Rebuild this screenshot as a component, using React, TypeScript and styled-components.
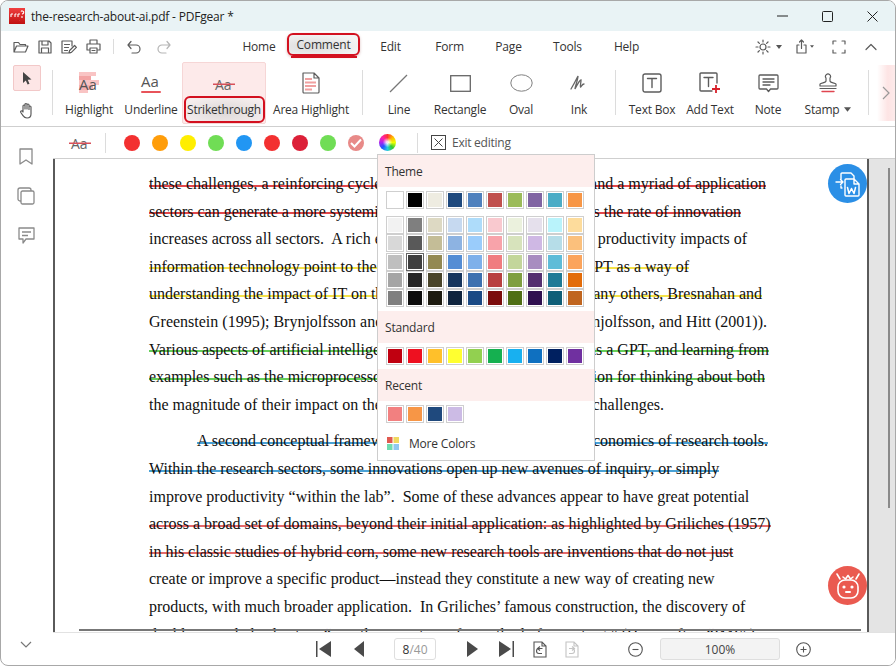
import React from "react";
import styled, { createGlobalStyle } from "styled-components";

const Global = createGlobalStyle`
  html, body { margin: 0; padding: 0; background: #fff; }
  #root { width: 896px; height: 666px; overflow: hidden; }
  * { box-sizing: border-box; }
`;

const UI = `"Open Sans", "Noto Sans", sans-serif`;

const Win = styled.div`
  position: relative; width: 896px; height: 666px; display: flex; flex-direction: column;
  background: #fff; border: 1px solid #a8a8a8; border-radius: 8px; overflow: hidden;
  font-family: ${UI}; color: #333;
`;
const TitleBar = styled.div`
  flex: none; height: 30px; background: #e9f3f5; display: flex; align-items: center; padding-left: 8px;
`;
const TitleText = styled.div`
  margin-left: 6px; font-size: 12px; letter-spacing: -0.2px; color: #222; white-space: nowrap;
`;
const WinControls = styled.div`
  margin-left: auto; display: flex; align-items: center;
`;
const WinBtn = styled.div`
  width: 45px; height: 30px; display: flex; align-items: center; justify-content: center;
`;
const MenuBar = styled.div`
  flex: none; height: 31px; display: flex; align-items: center; padding-left: 8px;
`;
const QuickBtn = styled.div<{ $w?: number; $ml?: number }>`
  flex: none; width: ${(p) => p.$w ?? 24}px; margin-left: ${(p) => p.$ml ?? 0}px; height: 24px; display: flex; align-items: center; justify-content: center;
`;
const VSep = styled.div<{ $h: number; $ml: number; $mr: number; $mt?: number }>`
  flex: none; width: 1px; height: ${(p) => p.$h}px; background: #dcdcdc;
  margin-left: ${(p) => p.$ml}px; margin-right: ${(p) => p.$mr}px; margin-top: ${(p) => p.$mt ?? 0}px;
`;
const Tabs = styled.div`
  display: flex; align-items: center; margin-left: 52px; height: 31px;
`;
const Tab = styled.div<{ $w: number }>`
  width: ${(p) => p.$w}px; text-align: center; font-size: 12px; letter-spacing: -0.2px; color: #333;
`;
const ActiveTab = styled.div`
  position: relative; width: 73px; height: 23px; margin-top: -5px; margin-right: 1px; border: 2px solid #d3101f; border-radius: 6px;
  background: radial-gradient(ellipse at 30% 60%, #dcdcdc, #f4f4f4 80%);
  display: flex; align-items: center; justify-content: center; font-size: 12px; letter-spacing: -0.2px; color: #333; padding-top: 1px;
  box-shadow: 0 1px 3px rgba(120,0,0,.25);
  &::after { content: ""; position: absolute; left: 2px; right: 1px; bottom: -4px; height: 2px; background: #d3101f; }
`;
const RightTools = styled.div`
  margin-left: auto; display: flex; align-items: center; padding-right: 9px;
`;
const Ribbon = styled.div`
  flex: none; height: 65px; display: flex; align-items: flex-start; border-bottom: 1px solid #cfcfcf;
`;
const HandCol = styled.div`
  width: 51px; flex: none; height: 62px; display: flex; flex-direction: column; align-items: flex-start; padding-left: 12px; padding-top: 3px;
`;
const ToolToggle = styled.div<{ $on?: boolean }>`
  width: 28px; height: 26px; display: flex; align-items: center; justify-content: center; border-radius: 2px;
  background: ${(p) => (p.$on ? "#fde6e6" : "transparent")};
  border: 1px solid ${(p) => (p.$on ? "#f2c8c8" : "transparent")};
  margin-bottom: ${(p) => (p.$on ? 6 : 0)}px;
`;
const RibbonItem = styled.div<{ $w: number }>`
  flex: none; width: ${(p) => p.$w}px; height: 62px; display: flex; flex-direction: column; align-items: center;
`;
const IconArea = styled.div`
  height: 34px; width: 100%; display: flex; align-items: center; justify-content: center; padding-top: 8px;
`;
const RibbonLabel = styled.div`
  display: flex; align-items: center; gap: 5px; font-size: 12px; letter-spacing: -0.22px; line-height: 27px; color: #333; white-space: nowrap;
`;
const StrikeItem = styled(RibbonItem)`
  background: #fdeaea; border: 1px solid #f6d6d6; border-radius: 2px;
`;
const StrikeLabel = styled.div`
  width: 81px; height: 27px; margin-top: -1px; border: 2px solid #d3101f; border-radius: 6px; font-size: 12px; letter-spacing: -0.22px;
  display: flex; align-items: center; justify-content: center; color: #333; white-space: nowrap;
  background: radial-gradient(ellipse at 50% 60%, #dcd8d8, #f6eeee 85%);
`;
const RibbonMore = styled.div`
  margin-left: auto; width: 18px; height: 56px; margin-top: 3px; display: flex; align-items: center; justify-content: center;
  background: linear-gradient(90deg, #fff, #fde4e4 60%, #fdeaea);
`;
const Body = styled.div`
  flex: 1; min-height: 0; display: flex;
`;
const Sidebar = styled.div`
  flex: none; width: 52px; display: flex; flex-direction: column; align-items: center; padding-top: 10px; position: relative;
`;
const SideBtn = styled.div`
  flex: none; height: 39.5px; width: 100%; display: flex; align-items: center; justify-content: center; padding-right: 2px;
`;
const SideFoot = styled.div`
  margin-top: auto; height: 40px; display: flex; align-items: center; justify-content: center; padding-right: 2px;
`;
const Main = styled.div`
  flex: 1; min-width: 0; display: flex; flex-direction: column;
`;
const SubBar = styled.div`
  flex: none; height: 32px; display: flex; align-items: center; border-bottom: 1px solid #cfcfcf; padding-left: 13px;
`;
const SubIcon = styled.div`
  width: 28px; display: flex; justify-content: center;
`;
const Dots = styled.div`
  display: flex; gap: 12px; align-items: center;
`;
const Dot = styled.div<{ $c: string }>`
  width: 16px; height: 16px; border-radius: 50%; background: ${(p) => p.$c}; display: flex; align-items: center; justify-content: center;
`;
const Wheel = styled.div`
  width: 17px; height: 17px; border-radius: 50%; margin-left: 3px;
  background: radial-gradient(circle, rgba(255,255,255,.85) 0 8%, transparent 40%), conic-gradient(#f33, #fb0, #ef0, #3c3, #2cd, #25f, #a2e, #f2a, #f33);
`;
const ExitLabel = styled.div`
  margin-left: 6px; font-size: 12px; letter-spacing: -0.25px; color: #555;
`;
const DocRow = styled.div`
  flex: 1; min-height: 0; display: flex;
`;
const Doc = styled.div`
  position: relative; width: 816px; flex: none; overflow: hidden; border-left: 2px solid #5a5a5a; border-right: 2px solid #5a5a5a;
  padding: 11px 0 0 94px; font-family: "Liberation Serif", "Times New Roman", serif; font-size: 16px; color: #111;
`;
const Para = styled.div`
  margin-bottom: 9px;
`;
const Line = styled.div<{ $w: number; $indent?: number }>`
  display: flex; justify-content: space-between; white-space: pre; height: 27.6px; line-height: 27.6px;
  width: ${(p) => p.$w}px; margin-left: ${(p) => p.$indent ?? 0}px;
`;
const Seg = styled.span<{ $s?: string }>`
  flex: none;
  background: ${(p) => (p.$s ? `linear-gradient(${p.$s}, ${p.$s}) 0 14.6px / 100% 2px no-repeat` : "none")};
`;
const PageEdge = styled.div`
  position: absolute; left: 24px; width: 782px; top: 470px; height: 2px; background: #777;
`;
const ScrollTrack = styled.div`
  flex: 1; background: #e4e4e4; position: relative;
`;
const ScrollThumb = styled.div`
  position: absolute; top: 9px; right: 5px; width: 2px; height: 340px; background: #8a8a8a;
`;
const Status = styled.div`
  flex: none; height: 33px; display: flex; align-items: center; background: #fff; border-top: 1px solid #e2e2e2;
`;
const NavBtn = styled.div<{ $ml: number; $w?: number }>`
  flex: none; margin-left: ${(p) => p.$ml}px; width: ${(p) => p.$w ?? 16}px; display: flex; justify-content: center; align-items: center;
`;
const PageBox = styled.div`
  flex: none; margin-left: 27.5px; width: 42px; height: 22px; border: 1px solid #dedede; border-radius: 3px; display: flex; align-items: center; justify-content: center;
  font-size: 12px; color: #333;
`;
const Dim = styled.span`
  color: #999;
`;
const ZoomBox = styled.div`
  flex: none; margin-left: 17px; width: 120px; height: 22px; border: 1px solid #dedede; border-radius: 3px; background: #f3f3f3;
  display: flex; align-items: center; justify-content: center; font-size: 12px; color: #444;
`;
const Popup = styled.div`
  position: absolute; left: 376px; top: 153px; width: 218px; height: 307px; background: #fff; border: 1px solid #cdcdcd; z-index: 5;
  display: flex; flex-direction: column;
`;
const PopHead = styled.div`
  height: 32px; flex: none; background: #fdeeed; display: flex; align-items: center; padding-left: 7px; font-size: 12px; color: #333; letter-spacing: -0.2px;
`;
const SwatchRow = styled.div<{ $mt: number; $mb?: number }>`
  display: flex; gap: 2px; padding-left: 8px; margin-top: ${(p) => p.$mt}px; margin-bottom: ${(p) => p.$mb ?? 0}px;
`;
const Swatch = styled.div<{ $c: string; $sel?: boolean }>`
  width: 18px; height: 18px; padding: 1px; flex: none; border: 1px solid ${(p) => (p.$sel ? "#666" : "#cfcfcf")};
  background: ${(p) => p.$c}; background-clip: content-box;
`;
const SwatchGap = styled.div<{ $h: number }>`
  flex: none; height: ${(p) => p.$h}px;
`;
const More = styled.div`
  display: flex; align-items: center; padding-left: 9px; margin-top: 12px; font-size: 12px; letter-spacing: -0.2px; color: #333; gap: 10px;
`;
const Float = styled.div<{ $c: string; $top: number }>`
  position: absolute; left: 827px; top: ${(p) => p.$top}px; width: 39px; height: 39px; border-radius: 50%; background: ${(p) => p.$c};
  display: flex; align-items: center; justify-content: center; z-index: 4;
`;

const S = { fill: "none", stroke: "#5c5c5c", strokeWidth: 1.2, strokeLinecap: "round" as const, strokeLinejoin: "round" as const };

const Logo = () => (
  <svg width="16" height="16" viewBox="0 0 16 16">
    <defs><linearGradient id="lg" x1="0" y1="0" x2="0" y2="1"><stop offset="0" stopColor="#f04040" /><stop offset="1" stopColor="#c01010" /></linearGradient></defs>
    <rect width="16" height="16" fill="url(#lg)" />
    <path d="M2 6v3M2 6h2M6 6v3M6 6h1.5M9 6v3M9 6h2M12 3.5a1.5 1.5 0 1 1 1 2.4M13 8v2M10.5 12.5h.1" stroke="#fff" strokeWidth="1.1" fill="none" />
  </svg>
);
const Svg = ({ w = 16, h = 16, vb, children }: { w?: number; h?: number; vb?: string; children: React.ReactNode }) => (
  <svg width={w} height={h} viewBox={vb ?? `0 0 ${w} ${h}`} {...S}>{children}</svg>
);
const Folder = () => <Svg w={16} h={14}><path d="M1 12V2.5h4.5l1.5 2h5.5v1.5M1 12l2.5-6h11.5l-2.5 6z" /></Svg>;
const Save = () => <Svg w={14} h={14}><path d="M1 1h10l2 2v10H1zM4 1v4h6V1M3.5 13V8h7v5" /></Svg>;
const SaveAs = () => <Svg w={16} h={14}><path d="M9 13H1V1h10v5M3.5 4.5h5M3.5 7.5h4M3.5 10.5h3M8 13l.6-2.5 5-5 1.8 1.8-5 5z" /></Svg>;
const Print = () => <Svg w={15} h={15}><path d="M4 5V1h7v4M3.5 11H1V5h13v6h-2.5M4 9h7v5H4z" /><path d="M6 11.5h3" /></Svg>;
const Undo = ({ c = "#5c5c5c" }: { c?: string }) => (
  <svg width="14" height="14" viewBox="0 0 14 14" {...S} stroke={c}><path d="M1 5h8a3.8 3.8 0 0 1 0 8H5M4 1.5 1 5l3 3.5" /></svg>
);
const Redo = () => (
  <svg width="14" height="14" viewBox="0 0 14 14" {...S} stroke="#b5b5b5"><path d="M13 5H5a3.8 3.8 0 0 0 0 8h4M10 1.5 13 5l-3 3.5" /></svg>
);
const Sun = () => <Svg w={16} h={16}><circle cx="8" cy="8" r="3" /><path d="M8 1v2M8 13v2M1 8h2M13 8h2M3 3l1.4 1.4M11.6 11.6 13 13M3 13l1.4-1.4M11.6 4.4 13 3" /></Svg>;
const Caret = ({ c = "#555", w = 6, h = 4 }: { c?: string; w?: number; h?: number }) => <svg width={w} height={h} viewBox="0 0 6 4"><path d="M0 0h6L3 4z" fill={c} /></svg>;
const Share = () => <Svg w={14} h={15}><path d="M4 6H2v8h9V6H9M6.5 9.5V1M4.5 3 6.5 1l2 2" /></Svg>;
const Full = () => <Svg w={14} h={14}><path d="M1 4V1h3M10 1h3v3M13 10v3h-3M4 13H1v-3" /></Svg>;
const Up = () => <Svg w={12} h={8}><path d="M1 6.5 6 1.5l5 5" /></Svg>;
const Pointer = () => <svg width="12" height="15" viewBox="0 0 12 15"><path d="M2 1v11l2.8-2.6 1.8 4.2 1.9-.8-1.8-4.1 3.8-.3z" fill="#444" /></svg>;
const HandIco = () => (
  <svg width="16" height="17" viewBox="0 0 16 17" {...S}>
    <path d="M4 10V4a1 1 0 0 1 2 0v3V2.5a1 1 0 0 1 2 0V7V3a1 1 0 0 1 2 0v4.5V5a1 1 0 0 1 2 0v7c0 2.5-1.5 4-4 4-2 0-3-.8-4-2.3L1.8 10.5c-.8-1.3.8-2.2 1.7-1.2z" />
  </svg>
);
const AaGlyph = styled.text`
  font-family: ${UI}; font-size: 15px; fill: #555;
`;
const HighlightIco = () => (
  <svg width="24" height="22" viewBox="0 0 24 22">
    <rect x="2" y="0" width="17" height="4" fill="#f9c4c4" /><rect x="2" y="4" width="12" height="4" fill="#f3a4a4" />
    <rect x="2" y="8" width="20" height="5" fill="#f9c4c4" /><rect x="2" y="13" width="14" height="5" fill="#f5b0b0" /><rect x="2" y="18" width="9" height="3" fill="#f9c4c4" />
    <AaGlyph x="2" y="18">Aa</AaGlyph>
  </svg>
);
const UnderlineIco = () => (
  <svg width="24" height="22" viewBox="0 0 24 22">
    <AaGlyph x="2" y="15">Aa</AaGlyph><rect x="2" y="19" width="20" height="2" rx="1" fill="#e8535a" />
  </svg>
);
const StrikeIco = () => (
  <svg width="24" height="18" viewBox="0 0 24 18">
    <AaGlyph x="3" y="15" style={{ fontSize: 14, fill: "#666" }}>Aa</AaGlyph><rect x="1" y="8.5" width="22" height="1.5" fill="#d8505a" />
  </svg>
);
const AreaIco = () => (
  <svg width="20" height="22" viewBox="0 0 20 22" {...S}>
    <path d="M2 1h11l5 5v14a1 1 0 0 1-1 1H3a1 1 0 0 1-1-1z M13 1v5h5" />
    <path d="M4 7h7M4 10.5h11M4 14h11M4 17.5h7" stroke="#f0a0a0" strokeWidth="2" strokeLinecap="butt" />
  </svg>
);
const LineIco = () => <svg width="20" height="20" viewBox="0 0 20 20"><path d="M1 19 18 2" stroke="#777" strokeWidth="1.2" /></svg>;
const RectIco = () => <svg width="21" height="17" viewBox="0 0 21 17"><rect x=".7" y=".7" width="19.6" height="15.6" fill="none" stroke="#666" strokeWidth="1.3" /></svg>;
const OvalIco = () => <svg width="23" height="18" viewBox="0 0 23 18"><ellipse cx="11.5" cy="9" rx="10.7" ry="8.2" fill="none" stroke="#808080" strokeWidth="1" /></svg>;
const InkIco = () => <svg width="18" height="16" viewBox="0 0 18 16"><path d="M1 14C4 9 7 3 8 1c0 4-3 10-3 13 2-4 5-9 6-9 0 3-1 6-.5 7 .7 0 1.5-3 3.5-3" fill="none" stroke="#666" strokeWidth="1.3" strokeLinecap="round" /></svg>;
const TextBoxIco = () => (
  <svg width="20" height="20" viewBox="0 0 20 20" {...S} strokeWidth={1.4}><rect x="1" y="1" width="18" height="18" rx="2" /><path d="M5.5 5.5h9M10 5.5v9" /></svg>
);
const AddTextIco = () => (
  <svg width="22" height="22" viewBox="0 0 22 22" {...S} strokeWidth={1.4}>
    <path d="M13 19H2a1 1 0 0 1-1-1V2a1 1 0 0 1 1-1h15a1 1 0 0 1 1 1v9" /><path d="M5 5.5h9M9.5 5.5v9" />
    <path d="M17 13v8M13 17h8" stroke="#d8202a" strokeWidth="1.8" strokeLinecap="butt" />
  </svg>
);
const NoteIco = () => (
  <svg width="21" height="19" viewBox="0 0 21 19" {...S} strokeWidth={1.3}><path d="M2 1h17a1 1 0 0 1 1 1v12a1 1 0 0 1-1 1h-6.5l-2 2.5-2-2.5H2a1 1 0 0 1-1-1V2a1 1 0 0 1 1-1z" /><path d="M5 5h11M5 8h11M5 11h7" /></svg>
);
const StampIco = () => (
  <svg width="18" height="20" viewBox="0 0 18 20" {...S} strokeWidth={1.2}>
    <path d="M7 8V5a2.5 2.5 0 1 1 4 0v3M7 8c0 2-5 1.5-6 3v2h16v-2c-1-1.5-6-1-6-3" /><path d="M1 15.5h16" /><path d="M3 18.5h12" stroke="#e04650" strokeWidth="1.4" />
  </svg>
);
const Chevron = ({ d = "M1 1l6 6-6 6", w = 8, h = 14, c = "#999" }: { d?: string; w?: number; h?: number; c?: string }) => (
  <svg width={w} height={h} viewBox={`0 0 ${w} ${h}`} fill="none" stroke={c} strokeWidth="1.2"><path d={d} /></svg>
);
const SideS = { fill: "none", stroke: "#8a8a8a", strokeWidth: 1.3, strokeLinejoin: "round" as const };
const BookmarkIco = () => <svg width="14" height="17" viewBox="0 0 14 17" {...SideS}><path d="M1 1h12v15l-6-4-6 4z" /></svg>;
const PagesIco = () => <svg width="18" height="18" viewBox="0 0 18 18" {...SideS}><path d="M4 14H3a2 2 0 0 1-2-2V3a2 2 0 0 1 2-2h9a2 2 0 0 1 2 2v1" /><rect x="4" y="4" width="13" height="13" rx="1.5" /></svg>;
const CommentIco = () => <svg width="17" height="17" viewBox="0 0 17 17" {...SideS}><path d="M1 1h15v11H8l-3 4v-4H1z" /><path d="M4 5h9M4 8.5h6" /></svg>;
const XBox = () => <svg width="15" height="15" viewBox="0 0 15 15" fill="none" stroke="#444" strokeWidth="1"><rect x=".5" y=".5" width="14" height="14" /><path d="M3.5 3.5l8 8M11.5 3.5l-8 8" /></svg>;
const Check = () => <svg width="12" height="10" viewBox="0 0 12 10"><path d="M1 5l3.5 3.5L11 1.5" fill="none" stroke="#fff" strokeWidth="2" /></svg>;
const NAV = "#4a4a4a";
const First = () => <svg width="15" height="16" viewBox="0 0 15 16"><rect width="1.5" height="16" fill={NAV} /><path d="M15 0v16L3 8z" fill={NAV} /></svg>;
const Prev = () => <svg width="10" height="16" viewBox="0 0 10 16"><path d="M10 0v16L0 8z" fill={NAV} /></svg>;
const Next = () => <svg width="11" height="16" viewBox="0 0 11 16"><path d="M0 0v16l11-8z" fill={NAV} /></svg>;
const Last = () => <svg width="15" height="16" viewBox="0 0 15 16"><rect x="13.5" width="1.5" height="16" fill={NAV} /><path d="M0 0v16l12-8z" fill={NAV} /></svg>;
const PageBack = () => <svg width="14" height="17" viewBox="0 0 14 17" fill="none" stroke="#555" strokeWidth="1.1"><path d="M1 1h8l4 4v11H1zM9 1v4h4" /><path d="M10 13.5H7a2.5 2.5 0 0 1 0-5h3.5M8 6.5 5.5 8.5 8 10.5" transform="translate(-1 -1)" /></svg>;
const PageFwd = () => <svg width="14" height="17" viewBox="0 0 14 17" fill="none" stroke="#c4c4c4" strokeWidth="1.1"><path d="M1 1h8l4 4v11H1zM9 1v4h4" /><path d="M4 12.5h3a2.5 2.5 0 0 0 0-5H4M7 5.5l2.5 2L7 9.5" /></svg>;
const Minus = () => <svg width="15" height="15" viewBox="0 0 15 15" fill="none" stroke="#555" strokeWidth="1.1"><circle cx="7.5" cy="7.5" r="6.8" /><path d="M4.5 7.5h6" /></svg>;
const Plus = () => <svg width="15" height="15" viewBox="0 0 15 15" fill="none" stroke="#555" strokeWidth="1.1"><circle cx="7.5" cy="7.5" r="6.8" /><path d="M4.5 7.5h6M7.5 4.5v6" /></svg>;
const Squares = () => <svg width="12" height="13" viewBox="0 0 12 13"><rect width="5.5" height="6" fill="#e05a50" /><rect x="6.5" width="5.5" height="6" fill="#f0d860" /><rect y="7" width="5.5" height="6" fill="#70dcb0" /><rect x="6.5" y="7" width="5.5" height="6" fill="#90c8f0" /></svg>;
const ToWord = () => (
  <svg width="26" height="26" viewBox="0 0 26 26" fill="none" stroke="#fff" strokeWidth="1.4" strokeLinejoin="round" strokeLinecap="round">
    <path d="M6 8V3a1 1 0 0 1 1-1h9l3 3v3M7 17H6v-2" /><path d="M1 11h7M5.5 8.5 8 11l-2.5 2.5" />
    <path d="M11 8h8l5 5v11a1 1 0 0 1-1 1H11a1 1 0 0 1-1-1V9a1 1 0 0 1 1-1zM19 8v5h5" fill="#2b8fe6" />
    <path d="M12.5 16.5l1.5 6 2.5-5 2.5 5 1.5-6" strokeWidth="1.5" />
  </svg>
);
const Robot = () => (
  <svg width="28" height="28" viewBox="0 0 28 28" fill="none" stroke="#fff" strokeWidth="1.6" strokeLinejoin="round" strokeLinecap="round">
    <path d="M3 2l3 5M25 2l-3 5M9 5l2.5 2L14 3.5 16.5 7 19 5" />
    <rect x="4" y="8" width="20" height="18" rx="7" />
    <circle cx="10" cy="15" r=".8" fill="#fff" /><circle cx="18" cy="15" r=".8" fill="#fff" /><path d="M12 20h4" strokeWidth="2" />
  </svg>
);

const themeTop = ["#ffffff", "#000000", "#eeece1", "#1f497d", "#4f81bd", "#c0504d", "#9bbb59", "#8064a2", "#4bacc6", "#f79646"];
const themeRows = [
  ["#f2f2f2", "#7f7f7f", "#ddd9c3", "#c6d9f0", "#aedcfa", "#f9c9cf", "#ebf1dd", "#e5e0ec", "#b9f3fb", "#fddc9c"],
  ["#d8d8d8", "#595959", "#c4bd97", "#8db3e2", "#9accfb", "#f8a3aa", "#d7e3bc", "#cfb8e4", "#b6dde8", "#fbc07c"],
  ["#bfbfbf", "#3f3f3f", "#938953", "#548dd4", "#7eb0ea", "#f07c80", "#c3d69b", "#a88dc0", "#5fbcd8", "#fba45c"],
  ["#a5a5a5", "#262626", "#494429", "#17365d", "#3d71b0", "#b84040", "#7f9f40", "#553070", "#1f7a96", "#e36c0a"],
  ["#7f7f7f", "#0c0c0c", "#1d1b10", "#0f243e", "#1a4a85", "#7b0c0c", "#4f6f15", "#2f1050", "#0f5f78", "#c0651f"],
];
const standard = ["#c00010", "#ee1020", "#ffc02a", "#ffff30", "#92d050", "#15b050", "#18b0f0", "#0f70c0", "#002060", "#7030a0"];
const recent = ["#f28080", "#f79646", "#1f497d", "#ccbbe5"];

const RED = "#e2484c", YEL = "#f4e24a", GRN = "#66d05a", BLU = "#4aa2d6", RED2 = "#e46a6c";
type L = { l: string; r?: string; w: number; s?: string; i?: number };
const para1: L[] = [
  { l: "these challenges, a reinforcing cycle", r: "and a myriad of application", w: 617, s: RED },
  { l: "sectors can generate a more systemic", r: "accelerates the rate of innovation", w: 592, s: RED },
  { l: "increases across all sectors.  A rich empirical", r: "productivity impacts of", w: 598 },
  { l: "information technology point to the", r: "GPT as a way of", w: 540, s: YEL },
  { l: "understanding the impact of IT on the", r: "many others, Bresnahan and", w: 613, s: YEL },
  { l: "Greenstein (1995); Brynjolfsson and", r: "Brynjolfsson, and Hitt (2001)).", w: 618 },
  { l: "Various aspects of artificial intelligence", r: "as a GPT, and learning from", w: 620, s: GRN },
  { l: "examples such as the microprocessor", r: "foundation for thinking about both", w: 616, s: GRN },
  { l: "the magnitude of their impact on the", r: "challenges.", w: 515 },
];
const para2: L[] = [
  { l: "A second conceptual framework", r: "economics of research tools.", w: 571, s: BLU, i: 48 },
  { l: "Within the research sectors, some innovations open up new avenues of inquiry, or simply", w: 572, s: BLU },
  { l: "improve productivity “within the lab”.  Some of these advances appear to have great potential", w: 600 },
  { l: "across a broad set of domains, beyond their initial application: as highlighted by Griliches (1957)", w: 622, s: RED2 },
  { l: "in his classic studies of hybrid corn, some new research tools are inventions that do not just", w: 585, s: RED2 },
  { l: "create or improve a specific product—instead they constitute a new way of creating new", w: 566 },
  { l: "products, with much broader application.  In Griliches’ famous construction, the discovery of", w: 598 },
  { l: "double-cross hybridization “was the invention of a method of inventing.” (Hereinafter, “IMI”.)", w: 612 },
];
const DocLine = ({ d }: { d: L }) => (
  <Line $w={d.w} $indent={d.i}>
    <Seg $s={d.s}>{d.l}</Seg>
    {d.r && <Seg $s={d.s}>{d.r}</Seg>}
  </Line>
);

const Item = ({ w, icon, label }: { w: number; icon: React.ReactNode; label: React.ReactNode }) => (
  <RibbonItem $w={w}><IconArea>{icon}</IconArea><RibbonLabel>{label}</RibbonLabel></RibbonItem>
);

export default function App() {
  return (
    <Win>
      <Global />
      <TitleBar>
        <Logo />
        <TitleText>the-research-about-ai.pdf - PDFgear *</TitleText>
        <WinControls>
          <WinBtn><svg width="11" height="2"><path d="M0 1h11" stroke="#222" /></svg></WinBtn>
          <WinBtn><svg width="11" height="11"><rect x=".5" y=".5" width="10" height="10" rx="1" fill="none" stroke="#222" /></svg></WinBtn>
          <WinBtn><svg width="11" height="11"><path d="M.5.5l10 10M10.5.5l-10 10" stroke="#222" /></svg></WinBtn>
        </WinControls>
      </TitleBar>
      <MenuBar>
        <QuickBtn><Folder /></QuickBtn>
        <QuickBtn><Save /></QuickBtn>
        <QuickBtn><SaveAs /></QuickBtn>
        <QuickBtn><Print /></QuickBtn>
        <VSep $h={15} $ml={8} $mr={5} />
        <QuickBtn $w={30}><Undo /></QuickBtn>
        <QuickBtn $w={30}><Redo /></QuickBtn>
        <Tabs>
          <Tab $w={56}>Home</Tab>
          <ActiveTab>Comment</ActiveTab>
          <Tab $w={59}>Edit</Tab>
          <Tab $w={59}>Form</Tab>
          <Tab $w={59}>Page</Tab>
          <Tab $w={59}>Tools</Tab>
          <Tab $w={59}>Help</Tab>
        </Tabs>
        <RightTools>
          <QuickBtn $w={20}><Sun /></QuickBtn>
          <QuickBtn $w={10} $ml={1}><Caret /></QuickBtn>
          <QuickBtn $w={14} $ml={11}><Share /></QuickBtn>
          <QuickBtn $w={6}><Caret w={4} h={3} /></QuickBtn>
          <QuickBtn $w={34} $ml={7}><Full /></QuickBtn>
          <QuickBtn $w={30}><Up /></QuickBtn>
        </RightTools>
      </MenuBar>
      <Ribbon>
        <HandCol>
          <ToolToggle $on><Pointer /></ToolToggle>
          <ToolToggle><HandIco /></ToolToggle>
        </HandCol>
        <VSep $h={45} $mt={8} $ml={0} $mr={5} />
        <Item w={62} icon={<HighlightIco />} label="Highlight" />
        <Item w={62} icon={<UnderlineIco />} label="Underline" />
        <StrikeItem $w={84}><IconArea><StrikeIco /></IconArea><StrikeLabel>Strikethrough</StrikeLabel></StrikeItem>
        <Item w={90} icon={<AreaIco />} label="Area Highlight" />
        <VSep $h={45} $mt={8} $ml={6} $mr={6} />
        <Item w={60} icon={<LineIco />} label="Line" />
        <Item w={62} icon={<RectIco />} label="Rectangle" />
        <Item w={60} icon={<OvalIco />} label="Oval" />
        <Item w={56} icon={<InkIco />} label="Ink" />
        <VSep $h={45} $mt={8} $ml={8} $mr={7} />
        <Item w={58} icon={<TextBoxIco />} label="Text Box" />
        <Item w={58} icon={<AddTextIco />} label="Add Text" />
        <Item w={58} icon={<NoteIco />} label="Note" />
        <Item w={62} icon={<StampIco />} label={<>Stamp<Caret w={7} h={5} /></>} />
        <VSep $h={45} $mt={8} $ml={9} $mr={0} />
        <RibbonMore><Chevron /></RibbonMore>
      </Ribbon>
      <Body>
        <Sidebar>
          <SideBtn><BookmarkIco /></SideBtn>
          <SideBtn><PagesIco /></SideBtn>
          <SideBtn><CommentIco /></SideBtn>
          <SideFoot><Chevron d="M1 1l5 5 5-5" w={12} h={8} c="#777" /></SideFoot>
        </Sidebar>
        <Main>
          <SubBar>
            <SubIcon><StrikeIco /></SubIcon>
            <VSep $h={20} $ml={11} $mr={18} />
            <Dots>
              {["#f33030", "#ff9d0a", "#ffee00", "#70dd55", "#2196f3", "#f33030", "#dc2038", "#70dd55"].map((c, i) => <Dot key={i} $c={c} />)}
              <Dot $c="#e88a88"><Check /></Dot>
              <Wheel />
            </Dots>
            <VSep $h={20} $ml={21} $mr={13} />
            <XBox />
            <ExitLabel>Exit editing</ExitLabel>
          </SubBar>
          <DocRow>
            <Doc>
              <Para>{para1.map((d, i) => <DocLine key={i} d={d} />)}</Para>
              <Para>{para2.map((d, i) => <DocLine key={i} d={d} />)}</Para>
              <PageEdge />
            </Doc>
            <ScrollTrack><ScrollThumb /></ScrollTrack>
          </DocRow>
          <Status>
            <NavBtn $ml={262}><First /></NavBtn>
            <NavBtn $ml={19.5}><Prev /></NavBtn>
            <PageBox>8<Dim>/40</Dim></PageBox>
            <NavBtn $ml={28.5}><Next /></NavBtn>
            <NavBtn $ml={17.5}><Last /></NavBtn>
            <NavBtn $ml={18}><PageBack /></NavBtn>
            <NavBtn $ml={16}><PageFwd /></NavBtn>
            <NavBtn $ml={47}><Minus /></NavBtn>
            <ZoomBox>100%</ZoomBox>
            <NavBtn $ml={15}><Plus /></NavBtn>
          </Status>
        </Main>
      </Body>
      <Popup>
        <PopHead>Theme</PopHead>
        <SwatchRow $mt={4}>{themeTop.map((c) => <Swatch key={c} $c={c} />)}</SwatchRow>
        <SwatchGap $h={7} />
        {themeRows.map((r, i) => (
          <SwatchRow key={i} $mt={i ? 0.3 : 0}>
            {r.map((c, j) => <Swatch key={j} $c={c} $sel={i === 2 && j === 1} />)}
          </SwatchRow>
        ))}
        <SwatchGap $h={4} />
        <PopHead>Standard</PopHead>
        <SwatchRow $mt={4}>{standard.map((c) => <Swatch key={c} $c={c} />)}</SwatchRow>
        <SwatchGap $h={4} />
        <PopHead>Recent</PopHead>
        <SwatchRow $mt={4}>{recent.map((c) => <Swatch key={c} $c={c} />)}</SwatchRow>
        <More><Squares />More Colors</More>
      </Popup>
      <Float $c="#2b8fe6" $top={163}><ToWord /></Float>
      <Float $c="#ea5a50" $top={565}><Robot /></Float>
    </Win>
  );
}
